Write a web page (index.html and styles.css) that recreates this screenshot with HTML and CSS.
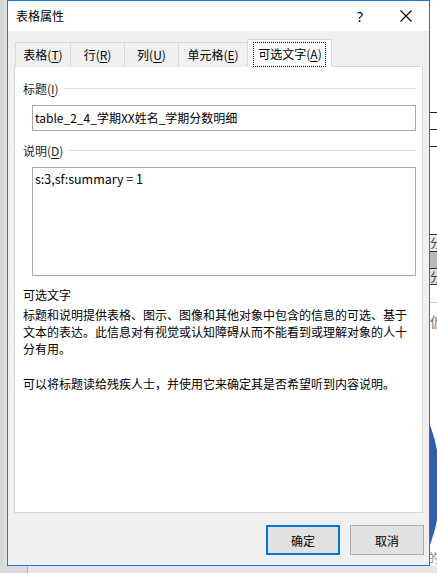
FILE: index.html
```html
<!DOCTYPE html>
<html lang="zh">
<head>
<meta charset="utf-8">
<title>表格属性</title>
<link rel="stylesheet" href="styles.css">
</head>
<body>
<div class="backdrop">
  <div class="bd-rule r1"></div>
  <div class="bd-rule r2"></div>
  <div class="bd-rule r3"></div>
  <div class="bd-cell c1">分</div>
  <div class="bd-cell c2"></div>
  <div class="bd-cell c3">分</div>
  <div class="bd-sep"></div>
  <div class="bd-char">仮</div>
  <div class="bd-arc"></div>
  <div class="bd-foot">的李</div>
  <div class="bd-vline"></div>
</div>
<div class="window">
  <div class="titlebar">
    <span class="title">表格属性</span>
    <span class="tb-btn help">?</span>
    <span class="tb-btn close">
      <svg width="12" height="12" viewBox="0 0 12 12"><path d="M0.5 0.5 L11.5 11.5 M11.5 0.5 L0.5 11.5" stroke="#000" stroke-width="1.1" fill="none"/></svg>
    </span>
  </div>
  <div class="body">
    <div class="tabs">
      <div class="tab t1">表格(<u>T</u>)</div>
      <div class="tab t2">行(<u>R</u>)</div>
      <div class="tab t3">列(<u>U</u>)</div>
      <div class="tab t4">单元格(<u>E</u>)</div>
      <div class="tab active"><span class="focus">可选文字(<u>A</u>)</span></div>
    </div>
    <div class="panel">
      <div class="group-label"><span>标题(<u>I</u>)</span><i class="rule"></i></div>
      <div class="input">table_2_4_学期XX姓名_学期分数明细</div>
      <div class="group-label second"><span>说明(<u>D</u>)</span><i class="rule"></i></div>
      <div class="textarea">s:3,sf:summary = 1</div>
      <div class="heading">可选文字</div>
      <p class="para">标题和说明提供表格、图示、图像和其他对象中包含的信息的可选、基于文本的表达。此信息对有视觉或认知障碍从而不能看到或理解对象的人十分有用。</p>
      <p class="para gap">可以将标题读给残疾人士，并使用它来确定其是否希望听到内容说明。</p>
    </div>
    <div class="buttons">
      <div class="btn default">确定</div>
      <div class="btn">取消</div>
    </div>
  </div>
</div>
</body>
</html>
```

FILE: styles.css
```css
* { box-sizing: border-box; }
html, body { margin: 0; padding: 0; }
body {
  width: 437px;
  height: 573px;
  overflow: hidden;
  position: relative;
  background: #e4e4e4;
  font-family: "Noto Sans CJK SC", "Noto Sans", sans-serif;
  font-size: 12px;
  color: #000;
}
.backdrop {
  position: absolute;
  inset: 0;
  background: linear-gradient(to right, #d2d2d2 0, #e2e2e2 7px, #ffffff 7px);
}
.bd-rule { position: absolute; left: 430px; width: 7px; height: 1px; background: #222; }
.r1 { top: 112px; }
.r2 { top: 129px; }
.r3 { top: 146px; }
.bd-cell {
  position: absolute; left: 430px; width: 7px; height: 17px;
  border-top: 1px solid #333; background: #d8d8d8;
  font-size: 12px; line-height: 16px; color: #444; overflow: hidden; white-space: nowrap;
}
.c1 { top: 234px; background: #ececec; }
.c2 { top: 251px; background: #b8b8b8; }
.c3 { top: 268px; border-bottom: 1px solid #333; background: #dedede; }
.bd-sep { position: absolute; left: 430px; top: 302px; width: 7px; height: 1px; background: #c8c8c8; }
.bd-char { position: absolute; left: 430px; top: 313px; width: 7px; overflow: hidden; color: #777; font-size: 14px; line-height: 16px; }
.bd-arc {
  position: absolute; left: 410px; top: 405px; width: 30px; height: 160px;
  border-radius: 0 30px 30px 0 / 0 80px 80px 0;
  background: #2f5fae; clip-path: inset(0 0 0 20px);
}
.bd-foot { position: absolute; left: 428px; top: 549px; font-size: 12px; color: #888; white-space: nowrap; }
.bd-vline { position: absolute; left: 0; top: 566px; width: 437px; height: 7px; background: #e6e6e6; border-left: 27px solid #dadada; }
.bd-vline::after { content: ""; position: absolute; left: 0; top: 0; width: 1px; height: 7px; background: #b0b0b0; }

.window {
  position: relative;
  margin-left: 7px;
  width: 423px;
  height: 566px;
  border: 1px solid #1a7bd3;
  background: #f0f0f0;
  display: flex;
  flex-direction: column;
}
.titlebar {
  height: 30px;
  background: #fff;
  display: flex;
  align-items: center;
  padding-left: 8px;
  flex: none;
}
.title { font-size: 12px; line-height: 16px; flex: 1; margin-top: 0; }
.tb-btn { display: flex; align-items: center; justify-content: center; }
.help { width: 46px; font-size: 14px; margin-right: 0; font-family: "Noto Sans", sans-serif; }
.close { width: 46px; }
.body {
  flex: 1;
  display: flex;
  flex-direction: column;
  padding: 9px 6px 0 6px;
}
.tabs {
  display: flex;
  align-items: flex-end;
  padding-left: 1px;
  height: 27px;
  position: relative;
  z-index: 2;
  margin-bottom: -1px;
}
.tab {
  height: 25px;
  border: 1px solid #d9d9d9;
  border-bottom: none;
  border-right: none;
  background: #f0f0f0;
  display: flex;
  align-items: center;
  justify-content: center;
  font-size: 12px;
  line-height: 16px;
  color: #000;
}
.t1 { width: 55px; }
.t2 { width: 54px; }
.t3 { width: 54px; }
.t4 { width: 69px; }
.tab.active {
  width: 85px;
  height: 28px;
  background: #fff;
  border-right: 1px solid #d9d9d9;
  border-bottom: 1px solid #fff;
  padding-top: 1px;
}
.focus {
  border: 1px dotted #000;
  padding: 3px 3px 4px 4px;
  margin-top: 1px;
}
u { text-decoration: underline; text-underline-offset: 2px; }
.panel {
  height: 447px;
  background: #fff;
  border: 1px solid #d9d9d9;
  padding: 13px 6px 0 8px;
  flex: none;
}
.group-label {
  display: flex;
  align-items: center;
  height: 17px;
  line-height: 17px;
  color: #1e1e1e;
}
.group-label .rule { flex: 1; height: 1px; background: #dcdcdc; margin-left: 5px; margin-top: -1px; }
.group-label.second { margin-top: 11px; }
.input {
  margin: 8px 0 0 9px;
  height: 26px;
  border: 1px solid #a9a9a9;
  padding: 0 2px;
  line-height: 23px;
  font-size: 12px;
  color: #000;
}
.textarea {
  margin: 8px 0 0 9px;
  height: 109px;
  border: 1px solid #a9a9a9;
  padding: 2px 2px;
  line-height: 17px;
  font-size: 12.5px;
}
.heading { margin-top: 10px; line-height: 17px; }
.para { margin: 3px 0 0 0; width: 388px; line-height: 17px; }
.para.gap { margin-top: 18px; }
.buttons {
  display: flex;
  justify-content: flex-end;
  gap: 10px;
  padding-right: 0;
  margin-top: 12px;
  margin-right: -1px;
}
.btn {
  width: 74px;
  height: 30px;
  background: #e1e1e1;
  border: 1px solid #adadad;
  display: flex;
  align-items: center;
  justify-content: center;
  font-size: 12px;
}
.btn.default { border: 2px solid #0078d7; }
```
